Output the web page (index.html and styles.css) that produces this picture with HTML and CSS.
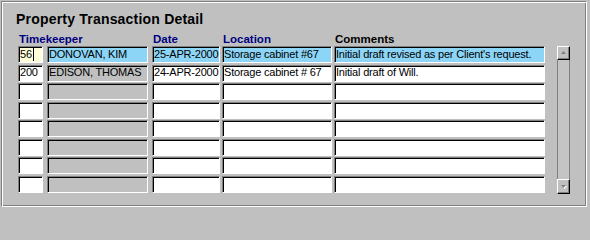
FILE: index.html
```html
<!DOCTYPE html>
<html>
<head>
<meta charset="utf-8">
<link rel="stylesheet" href="styles.css">
</head>
<body>
<div class="frame">
  <div class="title">Property Transaction Detail</div>
  <div class="table">
    <div class="rows">
      <div class="head">
        <div class="h h-tk">Timekeeper</div>
        <div class="h h-date">Date</div>
        <div class="h h-loc">Location</div>
        <div class="h h-com">Comments</div>
      </div>
      <div class="row">
        <div class="f f-id current-id">56<span class="caret"></span></div>
        <div class="f f-name current">DONOVAN, KIM</div>
        <div class="f f-date current">25-APR-2000</div>
        <div class="f f-loc current">Storage cabinet #67</div>
        <div class="f f-com current">Initial draft revised as per Client's request.</div>
      </div>
      <div class="row">
        <div class="f f-id">200</div>
        <div class="f f-name ro">EDISON, THOMAS</div>
        <div class="f f-date">24-APR-2000</div>
        <div class="f f-loc">Storage cabinet # 67</div>
        <div class="f f-com">Initial draft of Will.</div>
      </div>
      <div class="row"><div class="f f-id"></div><div class="f f-name ro"></div><div class="f f-date"></div><div class="f f-loc"></div><div class="f f-com"></div></div>
      <div class="row"><div class="f f-id"></div><div class="f f-name ro"></div><div class="f f-date"></div><div class="f f-loc"></div><div class="f f-com"></div></div>
      <div class="row"><div class="f f-id"></div><div class="f f-name ro"></div><div class="f f-date"></div><div class="f f-loc"></div><div class="f f-com"></div></div>
      <div class="row"><div class="f f-id"></div><div class="f f-name ro"></div><div class="f f-date"></div><div class="f f-loc"></div><div class="f f-com"></div></div>
      <div class="row"><div class="f f-id"></div><div class="f f-name ro"></div><div class="f f-date"></div><div class="f f-loc"></div><div class="f f-com"></div></div>
      <div class="row"><div class="f f-id"></div><div class="f f-name ro"></div><div class="f f-date"></div><div class="f f-loc"></div><div class="f f-com"></div></div>
    </div>
    <div class="scrollbar">
      <div class="sb-btn sb-up">
        <svg width="5" height="3" viewBox="0 0 5 3"><polygon points="2.5,0 5,3 0,3" fill="#808080"/></svg>
      </div>
      <div class="sb-track"></div>
      <div class="sb-btn sb-down">
        <svg width="6" height="4" viewBox="0 0 6 4"><polygon points="1,1 6,1 3.5,4" fill="#ffffff"/><polygon points="0,0 5,0 2.5,3" fill="#808080"/></svg>
      </div>
    </div>
  </div>
</div>
</body>
</html>
```

FILE: styles.css
```css
html, body {
  margin: 0;
  padding: 0;
  background: #c0c0c0;
}
body {
  width: 590px;
  height: 214px;
  overflow: hidden;
  font-family: "Liberation Sans", Arial, sans-serif;
}
.frame {
  box-sizing: border-box;
  margin: 1px 0 0 1px;
  width: 586px;
  height: 206px;
  border: 1px solid;
  border-color: #808080 #ffffff #ffffff #808080;
  box-shadow: inset 1px 1px 0 #ffffff, inset -1px -1px 0 #808080;
  padding: 9px 0 0 14px;
}
.title {
  font-size: 14px;
  font-weight: bold;
  line-height: 16px;
  color: #000;
  letter-spacing: 0.2px;
}
.table {
  display: flex;
  margin-top: 5px;
  padding-left: 2px;
}
.rows {
  display: flex;
  flex-direction: column;
  row-gap: 1.57px;
}
.head {
  display: flex;
  height: 14px;
  margin-bottom: -1.57px;
}
.h {
  font-size: 11.5px;
  font-weight: bold;
  line-height: 14px;
  color: #000080;
  padding-left: 1px;
  box-sizing: border-box;
}
.h-tk { width: 134px; }
.h-date { width: 70px; }
.h-loc { width: 112px; }
.h-com { width: 211px; color: #000; }
.row {
  display: flex;
  height: 17px;
}
.f {
  box-sizing: border-box;
  height: 17px;
  border: 1px solid;
  border-color: #808080 #ffffff #ffffff #808080;
  box-shadow: inset 1px 1px 0 #000000;
  background: #ffffff;
  font-size: 11px;
  letter-spacing: -0.2px;
  line-height: 13px;
  color: #000;
  padding: 0 0 1px 1px;
  display: flex;
  align-items: center;
  white-space: nowrap;
  overflow: hidden;
}
.f-id { width: 25px; margin-right: 4px; }
.f-name { width: 101px; margin-right: 4px; }
.f-date { width: 68px; margin-right: 2px; }
.f-loc { width: 110px; margin-right: 2px; }
.f-com { width: 211px; }
.ro { background: #c0c0c0; }
.current { background: #8dd5f7; }
.current-id { background: #ffffdc; }
.caret {
  display: inline-block;
  width: 1px;
  height: 13px;
  background: #000;
  margin-left: 1px;
}
.scrollbar {
  display: flex;
  flex-direction: column;
  width: 13px;
  margin-left: 12px;
  margin-top: 14px;
  height: 148px;
}
.sb-btn {
  box-sizing: border-box;
  width: 13px;
  background: #c0c0c0;
  border: 1px solid;
  border-color: #ffffff #000000 #000000 #ffffff;
  box-shadow: inset -1px -1px 0 #808080;
  display: flex;
  align-items: center;
  justify-content: center;
}
.sb-up { height: 14px; padding-bottom: 2px; }
.sb-down { height: 15px; }
.sb-track {
  flex: 1;
  box-sizing: border-box;
  border-left: 1px solid #808080;
  border-right: 1px solid #808080;
  background: #c4c4c4;
}
```
